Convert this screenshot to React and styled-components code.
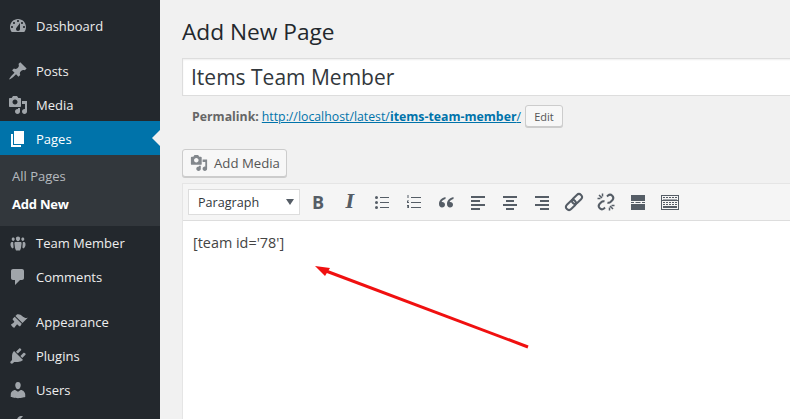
import React from "react";
import styled, { createGlobalStyle } from "styled-components";

const Global = createGlobalStyle`
  html, body { margin: 0; padding: 0; background: #f1f1f1; }
  #root { width: 790px; height: 419px; overflow: hidden; }
  * { box-sizing: border-box; }
`;

const Page = styled.div`
  display: flex;
  width: 790px;
  height: 419px;
  overflow: hidden;
  font-family: "Open Sans", sans-serif;
  font-size: 13px;
  color: #444;
`;

const Sidebar = styled.nav`
  width: 160px;
  flex: none;
  background: #23282d;
  padding-top: 9px;
  overflow: hidden;
`;

const Item = styled.div`
  position: relative;
  display: flex;
  align-items: center;
  gap: 8px;
  height: ${(p) => p.$height || 34}px;
  padding-left: 8px;
  padding-top: ${(p) => (p.$active ? "1px" : "0")};
  margin-top: ${(p) => p.$gap || 0}px;
  color: ${(p) => (p.$active ? "#fff" : "#eee")};
  background: ${(p) => (p.$active ? "#0073aa" : "transparent")};
  svg { fill: ${(p) => (p.$active ? "#fff" : "#a0a5aa")}; flex: none; }
`;

const Pointer = styled.span`
  position: absolute;
  right: 0;
  top: 9px;
  border: 8px solid transparent;
  border-left-width: 0;
  border-right-color: #f1f1f1;
`;

const Submenu = styled.div`
  background: #32373c;
  padding: 7px 0 7px;
  height: 71px;
`;

const SubItem = styled.div`
  height: 28px;
  line-height: 28px;
  padding-left: 12px;
  color: ${(p) => (p.$current ? "#fff" : "rgba(240,245,250,.7)")};
  font-weight: ${(p) => (p.$current ? 700 : 400)};
  letter-spacing: ${(p) => (p.$current ? "-0.2px" : "0")};
`;

const Main = styled.main`
  flex: 1;
  min-width: 0;
  display: flex;
  flex-direction: column;
  padding: 17px 0 0 22px;
`;

const Heading = styled.h1`
  margin: 0;
  font-size: 22.7px;
  line-height: 29px;
  font-weight: 400;
  color: #23282d;
`;

const TitleBox = styled.div`
  margin-top: 12px;
  height: 38px;
  margin-right: -4px;
  padding-left: 8px;
  background: #fff;
  border: 1px solid #ddd;
  font-size: 21px;
  line-height: 36px;
  color: #32373c;
  box-shadow: inset 0 1px 2px rgba(0, 0, 0, 0.07);
`;

const PermalinkRow = styled.div`
  display: flex;
  align-items: center;
  height: 22px;
  margin-top: 9px;
  padding-left: 10px;
  font-size: 12.3px;
  color: #666;
`;

const Strong = styled.strong`
  margin-right: 3px;
  font-weight: 700;
`;

const Slug = styled.a`
  color: #0073aa;
  text-decoration: underline;
  b { font-weight: 700; }
`;

const SmallButton = styled.button`
  margin-left: 4px;
  width: 38px;
  height: 22px;
  padding: 0;
  border: 1px solid #ccc;
  border-radius: 3px;
  background: #f7f7f7;
  box-shadow: 0 1px 0 #ccc;
  font: 11px "Open Sans", sans-serif;
  color: #555;
`;

const MediaButton = styled.button`
  display: flex;
  align-items: center;
  gap: 6px;
  width: 105px;
  height: 28px;
  margin-top: 22px;
  padding: 0 0 0 7px;
  border: 1px solid #ccc;
  border-radius: 3px;
  background: #f7f7f7;
  box-shadow: 0 1px 0 #ccc;
  font: 13.2px "Open Sans", sans-serif;
  color: #555;
  svg { fill: #82878c; }
`;

const Editor = styled.section`
  flex: 1;
  display: flex;
  flex-direction: column;
  margin-top: 6px;
  border-left: 1px solid #e5e5e5;
  border-top: 1px solid #e5e5e5;
`;

const Toolbar = styled.div`
  display: flex;
  align-items: center;
  height: 37px;
  flex: none;
  padding-left: 5px;
  background: #f5f5f5;
  border-bottom: 1px solid #ddd;
`;

const Select = styled.div`
  display: flex;
  align-items: center;
  justify-content: space-between;
  width: 112px;
  height: 26px;
  padding: 0 5px 0 9px;
  margin-right: 4px;
  background: #fff;
  border: 1px solid #ddd;
  font-size: 12.6px;
  color: #32373c;
`;

const Caret = styled.span`
  border: 4px solid transparent;
  border-top: 6px solid #555d66;
  border-bottom-width: 0;
`;

const ToolButton = styled.div`
  width: 28px;
  height: 26px;
  margin-right: 4px;
  flex: none;
  display: flex;
  align-items: center;
  justify-content: center;
  color: #555d66;
  font-size: 18px;
  line-height: 1;
  svg { fill: #555d66; display: block; }
`;

const Bold = styled.span`
  font-weight: 700;
`;

const Italic = styled.span`
  font-family: "DejaVu Serif", serif;
  font-weight: 700;
  font-style: italic;
  font-size: 18px;
`;

const ChainIcon = styled.svg`
  && {
    fill: none;
    stroke: #555d66;
    stroke-width: 2;
    stroke-linecap: butt;
  }
`;

const Body = styled.div`
  position: relative;
  flex: 1;
  background: #fff;
  padding: 12px 10px;
  font-size: 14.4px;
  line-height: 20px;
  color: #444;
`;

const Arrow = styled.svg`
  position: absolute;
  left: 127px;
  top: 41px;
`;

const Icon = ({ d, size = 20 }) => (
  <svg width={size} height={size} viewBox="0 0 20 20"><path d={d} /></svg>
);

const I = {
  dashboard: "M3.76 16h12.48c1.1-1.37 1.76-3.11 1.76-5 0-4.42-3.58-8-8-8s-8 3.58-8 8c0 1.89.66 3.63 1.76 5zM10 4c.55 0 1 .45 1 1s-.45 1-1 1-1-.45-1-1 .45-1 1-1zM6 6c.55 0 1 .45 1 1s-.45 1-1 1-1-.45-1-1 .45-1 1-1zm8 0c.55 0 1 .45 1 1s-.45 1-1 1-1-.45-1-1 .45-1 1-1zm-5.37 5.55L12 7v6c0 1.1-.9 2-2 2s-2-.9-2-2c0-.57.24-1.08.63-1.45zM4 10c.55 0 1 .45 1 1s-.45 1-1 1-1-.45-1-1 .45-1 1-1zm12 0c.55 0 1 .45 1 1s-.45 1-1 1-1-.45-1-1 .45-1 1-1z",
  post: "M10.44 3.02l1.82-1.82 6.36 6.35-1.83 1.82c-1.05-.68-2.48-.57-3.41.36l-.75.75c-.92.93-1.04 2.35-.35 3.41l-1.83 1.82-2.41-2.41-2.8 2.79c-.42.42-3.38 2.71-3.8 2.29s1.86-3.39 2.28-3.81l2.79-2.79L4.1 9.36l1.83-1.82c1.05.69 2.48.57 3.4-.36l.75-.75c.93-.92 1.05-2.35.36-3.41z",
  media: "M13 11V4c0-.55-.45-1-1-1h-1.67L9 1H5L3.67 3H2c-.55 0-1 .45-1 1v7c0 .55.45 1 1 1h10c.55 0 1-.45 1-1zM7 4.5c1.38 0 2.5 1.12 2.5 2.5S8.38 9.5 7 9.5 4.5 8.38 4.5 7 5.62 4.5 7 4.5zM14 6h5v10.5c0 1.38-1.12 2.5-2.5 2.5S14 17.88 14 16.5s1.12-2.5 2.5-2.5c.17 0 .34.02.5.05V9h-3V6zm-4 8.05V13h2v3.5c0 1.38-1.12 2.5-2.5 2.5S7 17.88 7 16.5 8.12 14 9.5 14c.17 0 .34.02.5.05z",
  page: "M6 15V2h10v13H6zm-1 1h8v2H3V5h2v11z",
  groups: "M10 3.5c1.3 0 2.1.9 2.1 2.1S11.3 8.3 10 8.3 7.9 6.8 7.9 5.6 8.7 3.5 10 3.5zM5.2 4.5c.9 0 1.5.7 1.5 1.6S6.1 8 5.2 8 3.7 7 3.7 6.100 4.300 4.500 5.200 4.500zm9.600 0c.9 0 1.500.700 1.500 1.600S15.700 8 14.800 8s-1.500-1-1.500-1.900.6-1.600 1.500-1.600zM7.500 9h5c.7 0 1.200.600 1.100 1.300L13 15l-1 2.500H8L7 15l-.6-4.700C6.300 9.600 6.800 9 7.500 9zM3 9.500c.5-.4 1.500-.5 2.200-.3l.4 5.300-.8 1C3.700 15 2.500 13.500 2.500 12c0-1 0-2 .5-2.500zm14 0c.5.500.5 1.500.5 2.500 0 1.500-1.200 3-2.300 3.500l-.8-1 .4-5.300c.7-.2 1.700-.1 2.200.3z",
  comments: "M5 2h9c1.1 0 2 .9 2 2v7c0 1.1-.9 2-2 2h-2l-5 5v-5H5c-1.100 0-2-.9-2-2V4c0-1.100.9-2 2-2z",
  appearance: "M14.48 11.06L7.41 3.99l1.5-1.5c.5-.56 2.3-.47 3.51.32 1.21.8 1.43 1.28 2.91 2.1 1.18.64 2.45 1.26 4.45.85zm-.71.71L6.7 4.7 4.93 6.47c-.39.39-.39 1.02 0 1.41l1.06 1.06c.39.39.39 1.03 0 1.42-.6.6-1.43 1.27-2.21 1.59-.78.31-.86.61-.53 1.34.32.72 1.6 2.01 2.33 2.33.72.33 1.04.23 1.35-.53.3-.77.98-1.61 1.58-2.21.39-.39 1.03-.39 1.42 0l1.06 1.06c.39.39 1.02.39 1.41 0z",
  plugins: "M13.11 4.36L9.87 7.6 8 5.73l3.24-3.24c.35-.34 1.05-.2 1.56.32.52.51.66 1.21.31 1.55zm-8 1.77l.91-1.12 9.01 9.01-1.19.84c-.71.71-2.63 1.16-3.82 1.16H6.14L4.9 17.26c-.59.59-1.54.59-2.12 0-.59-.58-.59-1.53 0-2.12l1.24-1.24v-3.88c0-1.13.4-3.05 1.09-3.89zm7.26 3.97l3.24-3.24c.34-.35 1.04-.21 1.55.31.52.51.66 1.21.31 1.55l-3.24 3.25z",
  users: "M10 9.25c-2.27 0-2.73-3.44-2.73-3.44C7 4.02 7.82 2 9.97 2c2.16 0 2.98 2.02 2.71 3.81 0 0-.41 3.44-2.68 3.44zm0 2.57L12.72 10c2.39 0 4.52 2.33 4.52 4.53v2.49s-3.65 1.13-7.24 1.13c-3.65 0-7.24-1.13-7.24-1.13v-2.49c0-2.25 1.94-4.53 4.43-4.53z",
  tools: "M16.68 9.77c-1.34 1.34-3.3 1.67-4.95.99l-5.41 6.52c-.99.99-2.59.99-3.58 0s-.99-2.59 0-3.58l6.52-5.42c-.68-1.65-.35-3.61.99-4.95 1.28-1.28 3.12-1.62 4.72-1.06l-2.89 2.89 2.82 2.82 2.86-2.86c.56 1.6.22 3.42-1.08 4.65z",
  ul: "M4.500 4a1.500 1.500 0 1 1 0 3 1.500 1.500 0 0 1 0-3zM8 5h9v1H8zM4.500 9a1.500 1.500 0 1 1 0 3 1.500 1.500 0 0 1 0-3zM8 10h9v1H8zM4.500 14a1.500 1.500 0 1 1 0 3 1.500 1.500 0 0 1 0-3zM8 15h9v1H8z",
  ol: "M3.5 3h1v3h-1zM3 8.5h2v.8H4v.7h1V11H3zM3 13h2v3H3v-.8h1v-.3h-.7v-.8H4V14H3zM7 5h10v1H7zM7 10h10v1H7zM7 15h10v1H7z",
  quote: "M9.500 5c-4 1-6.500 3.500-6.500 7 0 2.200 1.300 3.500 3 3.500 1.800 0 3-1.200 3-2.800C9 11 7.800 10 6.300 10c-.3 0-.5 0-.7.100C6 8.500 7.500 7.500 9.500 7zM17.500 5c-4 1-6.500 3.500-6.500 7 0 2.200 1.300 3.500 3 3.500 1.800 0 3-1.200 3-2.800 0-1.700-1.200-2.700-2.700-2.700-.3 0-.5 0-.7.100.4-1.600 1.900-2.600 3.900-3.100z",
  left: "M3 4h14v2H3zM3 8h9v2H3zM3 12h14v2H3zM3 16h9v2H3z",
  center: "M3 4h14v2H3zM6 8h8v2H6zM3 12h14v2H3zM6 16h8v2H6z",
  right: "M3 4h14v2H3zM8 8h9v2H8zM3 12h14v2H3zM8 16h9v2H8z",
  more: "M3 3h14v6H3zM3 12h14v6H3zM3 10h3v1H3zM7.5 10h5v1h-5zM14 10h3v1h-3z",
  kitchen: "M1 3h18v15H1zm1 1v4h16V4zm0 5v8h16V9zM3 5h2v1H3zm3 0h2v1H6zm3 0h2v1H9zm3 0h2v1h-2zm3 0h2v1h-2zM3 7h14v.5H3zM3 10h2v1H3zm3 0h2v1H6zm3 0h2v1H9zm3 0h2v1h-2zm3 0h2v1h-2zM3 12h2v1H3zm3 0h2v1H6zm3 0h2v1H9zm3 0h2v1h-2zm3 0h2v1h-2zM3 14h14v2H3z",
};

const MenuItem = ({ icon, label, gap, active, height }) => (
  <Item $gap={gap} $active={active} $height={height}>
    <Icon d={I[icon]} />
    {label && <span>{label}</span>}
    {active && <Pointer />}
  </Item>
);

const LinkIcon = () => (
  <ChainIcon width="20" height="20" viewBox="0 0 20 20">
    <g transform="rotate(-45 10 10)">
      <rect x="0" y="7" width="11.500" height="6" rx="3" />
      <rect x="8.500" y="7" width="11.500" height="6" rx="3" />
    </g>
  </ChainIcon>
);

const UnlinkIcon = () => (
  <ChainIcon width="20" height="20" viewBox="0 0 20 20">
    <path d="M11 4.500l1-1a3.200 3.200 0 0 1 4.500 4.500l-2 2c-1 1-2 1-3 .5" />
    <path d="M9 15.500l-1 1a3.200 3.200 0 0 1-4.500-4.500l2-2c1-1 2-1 3-.5" />
    <path strokeWidth="1.500" d="M3 3l3 3M6.500 1.500v3M1.500 6.500h3M17 17l-3-3M13.500 18.500v-3M18.500 13.500h-3" />
  </ChainIcon>
);

export default function App() {
  return (
    <>
      <Global />
      <Page>
        <Sidebar>
          <MenuItem icon="dashboard" label="Dashboard" />
          <MenuItem icon="post" label="Posts" gap={11} />
          <MenuItem icon="media" label="Media" height={33} />
          <MenuItem icon="page" label="Pages" active />
          <Submenu>
            <SubItem>All Pages</SubItem>
            <SubItem $current>Add New</SubItem>
          </Submenu>
          <MenuItem icon="groups" label="Team Member" />
          <MenuItem icon="comments" label="Comments" />
          <MenuItem icon="appearance" label="Appearance" gap={11} />
          <MenuItem icon="plugins" label="Plugins" />
          <MenuItem icon="users" label="Users" />
          <MenuItem icon="tools" />
        </Sidebar>
        <Main>
          <Heading>Add New Page</Heading>
          <TitleBox>Items Team Member</TitleBox>
          <PermalinkRow>
            <Strong>Permalink:</Strong>
            <Slug>http://localhost/latest/<b>items-team-member</b>/</Slug>
            <SmallButton>Edit</SmallButton>
          </PermalinkRow>
          <MediaButton><Icon d={I.media} size={18} />Add Media</MediaButton>
          <Editor>
            <Toolbar>
              <Select>Paragraph<Caret /></Select>
              <ToolButton><Bold>B</Bold></ToolButton>
              <ToolButton><Italic>I</Italic></ToolButton>
              {["ul", "ol", "quote", "left", "center", "right"].map((n) => (
                <ToolButton key={n}><Icon d={I[n]} /></ToolButton>
              ))}
              <ToolButton><LinkIcon /></ToolButton>
              <ToolButton><UnlinkIcon /></ToolButton>
              {["more", "kitchen"].map((n) => (
                <ToolButton key={n}><Icon d={I[n]} /></ToolButton>
              ))}
            </Toolbar>
            <Body>
              [team id='78']
              <Arrow width="230" height="100" viewBox="0 0 230 100">
                <path d="M218 85 L16 9" stroke="#f01010" strokeWidth="3" fill="none" />
                <path d="M5 4 L20 6 L15 14 Z" fill="#f01010" />
              </Arrow>
            </Body>
          </Editor>
        </Main>
      </Page>
    </>
  );
}
